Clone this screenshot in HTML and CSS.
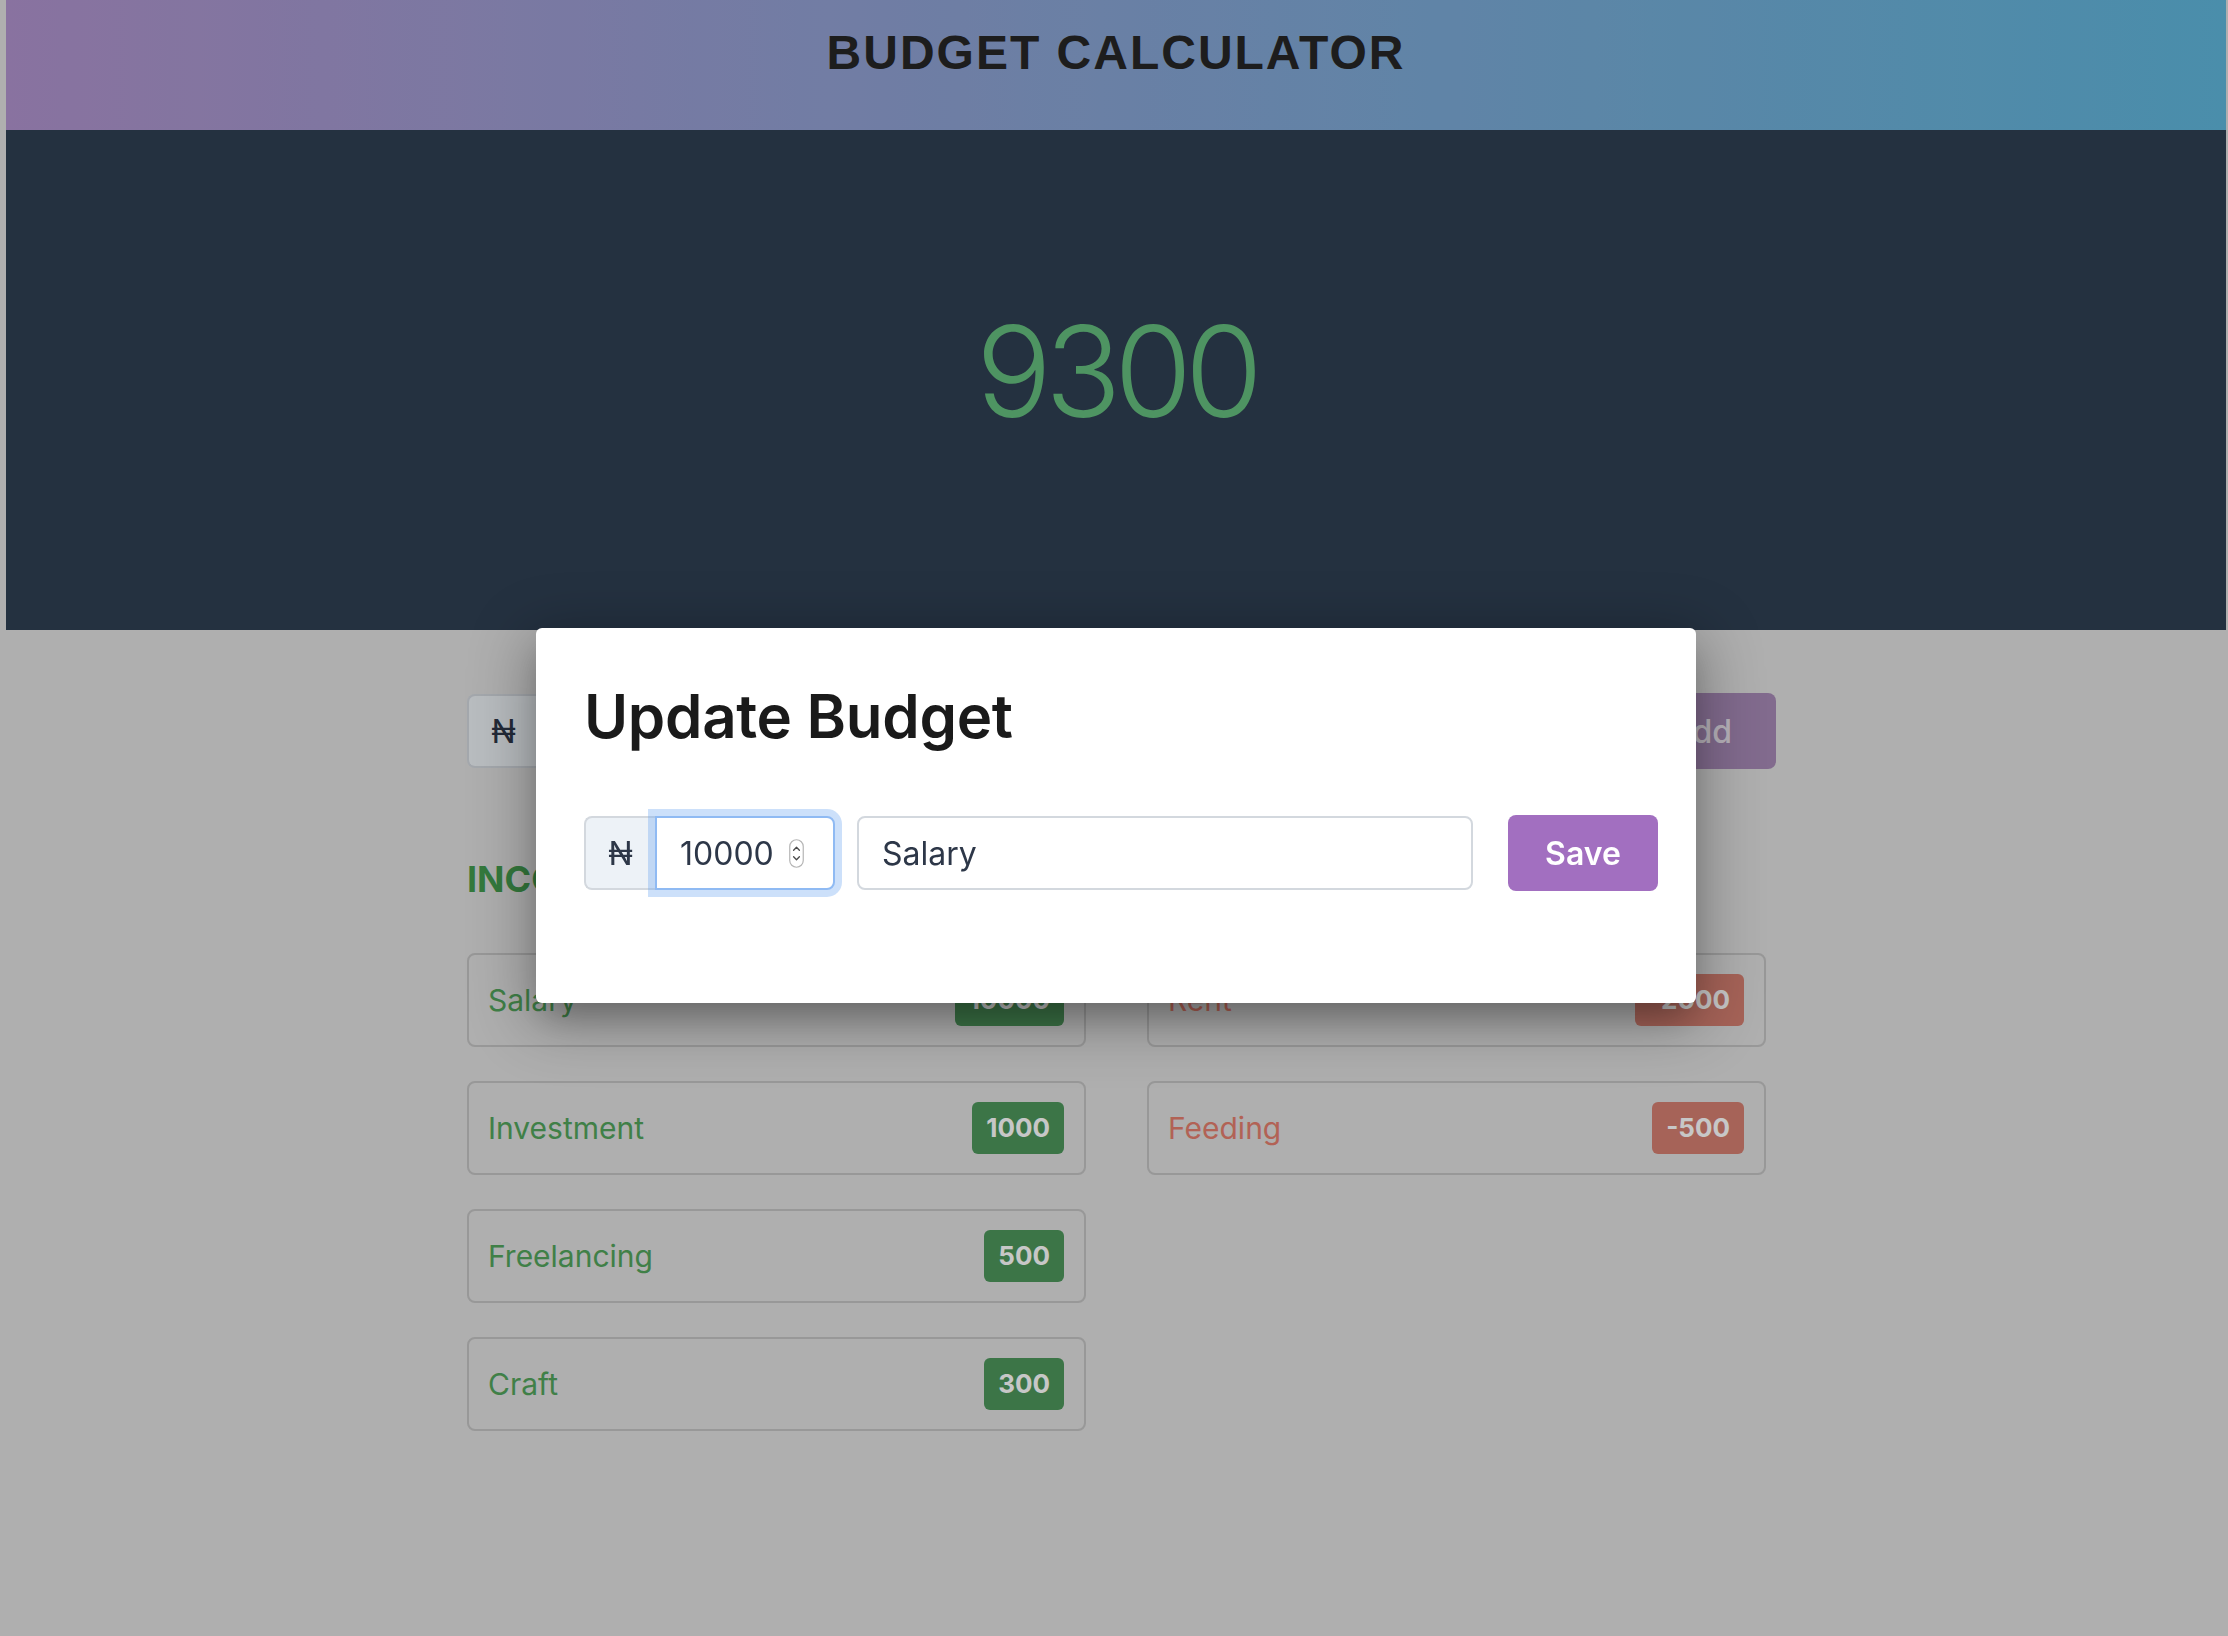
FILE: index.html
```html
<!DOCTYPE html>
<html lang="en">
<head>
<meta charset="utf-8">
<title>Budget Calculator</title>
<link rel="stylesheet" href="styles.css">
</head>
<body>
<div class="app">
  <header class="topbar"><h1 class="title">BUDGET CALCULATOR</h1></header>
  <section class="hero"><span class="balance">9300</span></section>
  <main class="content">
    <form class="entry-row">
      <div class="group">
        <span class="addon">₦</span>
        <div class="field field-num"><span>0</span></div>
      </div>
      <div class="field field-text field-grow"><span class="placeholder">Description</span></div>
      <button class="btn btn-add" type="button">Add</button>
    </form>
    <div class="columns">
      <section class="col">
        <h2 class="col-title income-title">INCOME</h2>
        <ul class="list">
          <li class="item income"><span>Salary</span><span class="badge badge-income">10000</span></li>
          <li class="item income"><span>Investment</span><span class="badge badge-income">1000</span></li>
          <li class="item income"><span>Freelancing</span><span class="badge badge-income">500</span></li>
          <li class="item income"><span>Craft</span><span class="badge badge-income">300</span></li>
        </ul>
      </section>
      <section class="col">
        <h2 class="col-title expense-title">EXPENSES</h2>
        <ul class="list">
          <li class="item expense"><span>Rent</span><span class="badge badge-expense">-2000</span></li>
          <li class="item expense"><span>Feeding</span><span class="badge badge-expense">-500</span></li>
        </ul>
      </section>
    </div>
  </main>
</div>
<div class="overlay"></div>
<div class="modal" role="dialog" aria-label="Update Budget">
  <h2 class="modal-title">Update Budget</h2>
  <div class="modal-row">
    <div class="group">
      <span class="addon">₦</span>
      <div class="field field-num focused">
        <span>10000</span>
        <svg class="spinner" width="15" height="29" viewBox="0 0 15 29" aria-hidden="true">
          <rect x="0.75" y="0.75" width="13.5" height="27.5" rx="6.75" fill="#fff" stroke="#b5b5b5" stroke-width="1.2"/>
          <path d="M4.6 11.2 L7.5 8.2 L10.4 11.2" fill="none" stroke="#4a4a4a" stroke-width="1.3" stroke-linecap="round" stroke-linejoin="round"/>
          <path d="M4.6 17.8 L7.5 20.8 L10.4 17.8" fill="none" stroke="#4a4a4a" stroke-width="1.3" stroke-linecap="round" stroke-linejoin="round"/>
        </svg>
      </div>
    </div>
    <div class="field field-text field-fixed">Salary</div>
    <button class="btn btn-save" type="button">Save</button>
  </div>
</div>
</body>
</html>
```

FILE: styles.css
```css
html, body {
  margin: 0;
  padding: 0;
  background: #e0e0e0;
}

body {
  font-family: Inter, "Noto Sans", "DejaVu Sans", sans-serif;
}

.app {
  margin-left: 6px;
  width: 2220px;
  min-height: 1636px;
  background: #e0e0e0;
}

.topbar {
  height: 130px;
  box-sizing: border-box;
  padding-top: 24px;
  background: linear-gradient(to right, #b093cd, #5fb6db);
  text-align: center;
}

.title {
  margin: 0;
  font: 700 48px/1.2 "Liberation Sans", Arial, sans-serif;
  letter-spacing: 2px;
  color: #262626;
}

.hero {
  height: 500px;
  box-sizing: border-box;
  padding-bottom: 18px;
  background: #2f3f52;
  display: flex;
  align-items: center;
  justify-content: center;
}

.balance {
  font: 300 126px/1.21 Inter, sans-serif;
  letter-spacing: -7px;
  color: #64be7e;
}

.content {
  margin-left: 461px;
  width: 1309px;
  padding-top: 63px;
}

.entry-row {
  display: flex;
  align-items: center;
  margin: 0;
}

.group {
  display: flex;
  flex: none;
  width: 251px;
}

.addon {
  flex: none;
  width: 71px;
  height: 74px;
  box-sizing: border-box;
  border: 2px solid #d3d8de;
  border-right: none;
  border-radius: 8px 0 0 8px;
  background: #edf2f7;
  display: flex;
  align-items: center;
  justify-content: center;
  font: 400 32px Inter, "DejaVu Sans", sans-serif;
  color: #2d3748;
}

.field {
  height: 74px;
  box-sizing: border-box;
  border: 2px solid #d3d8de;
  border-radius: 8px;
  background: #fff;
  display: flex;
  align-items: center;
  padding: 0 23px;
  font: 400 32px Inter, sans-serif;
  color: #2d3748;
}

.field-num {
  flex: none;
  width: 180px;
  border-radius: 0 8px 8px 0;
  justify-content: space-between;
  padding-right: 29px;
}

.field-num.focused {
  position: relative;
  z-index: 1;
  border-color: #8fbaf3;
  box-shadow: 0 0 0 7px rgba(100, 160, 240, 0.33);
}

.spinner {
  display: block;
  flex: none;
}

.field-text {
  margin-left: 22px;
}

.field-fixed {
  flex: none;
  width: 616px;
}

.field-grow {
  flex: 1;
}

.placeholder {
  color: #9aa3ae;
}

.btn {
  flex: none;
  margin-left: 35px;
  width: 150px;
  height: 76px;
  border: 0;
  border-radius: 8px;
  font: 600 32px Inter, sans-serif;
  cursor: pointer;
}

.btn-add {
  background: #a78ab6;
  color: rgba(255, 255, 255, 0.8);
  font-weight: 500;
}

.btn-save {
  background: #a26fc0;
  color: #fff;
}

.columns {
  display: grid;
  grid-template-columns: 619px 619px;
  column-gap: 61px;
  margin-top: 89px;
}

.col-title {
  margin: 0 0 52px;
  font: 700 36px/1.2 Inter, sans-serif;
}

.income-title { color: #439c4f; }
.expense-title { color: #d9705f; }

.list {
  list-style: none;
  margin: 0;
  padding: 0;
  display: flex;
  flex-direction: column;
  gap: 34px;
}

.item {
  height: 94px;
  box-sizing: border-box;
  border: 2px solid #c3c3c3;
  border-radius: 8px;
  padding: 0 20px 0 19px;
  display: flex;
  align-items: center;
  justify-content: space-between;
  font: 400 30px Inter, sans-serif;
}

.item.income { color: #52a45c; }
.item.expense { color: #e47e6e; }

.badge {
  height: 52px;
  padding: 0 14px;
  border-radius: 6px;
  font: 700 26px/52px Inter, sans-serif;
  color: #fff;
}

.badge-income { background: #4d975c; }
.badge-expense { background: #d57f71; }

.overlay {
  position: fixed;
  inset: 0;
  background: rgba(0, 0, 0, 0.22);
  z-index: 10;
}

.modal {
  position: absolute;
  top: 628px;
  left: 536px;
  width: 1160px;
  box-sizing: border-box;
  padding: 52px 38px 112px 48px;
  background: #fff;
  border-radius: 6px;
  box-shadow: 0 14px 60px 8px rgba(0, 0, 0, 0.3), 0 20px 30px -10px rgba(0, 0, 0, 0.22);
  z-index: 20;
}

.modal-title {
  margin: 0 0 63px;
  font: 600 60px/1.2 Inter, sans-serif;
  letter-spacing: -0.3px;
  color: #1a1a1a;
}

.modal-row {
  display: flex;
  align-items: center;
}
```
